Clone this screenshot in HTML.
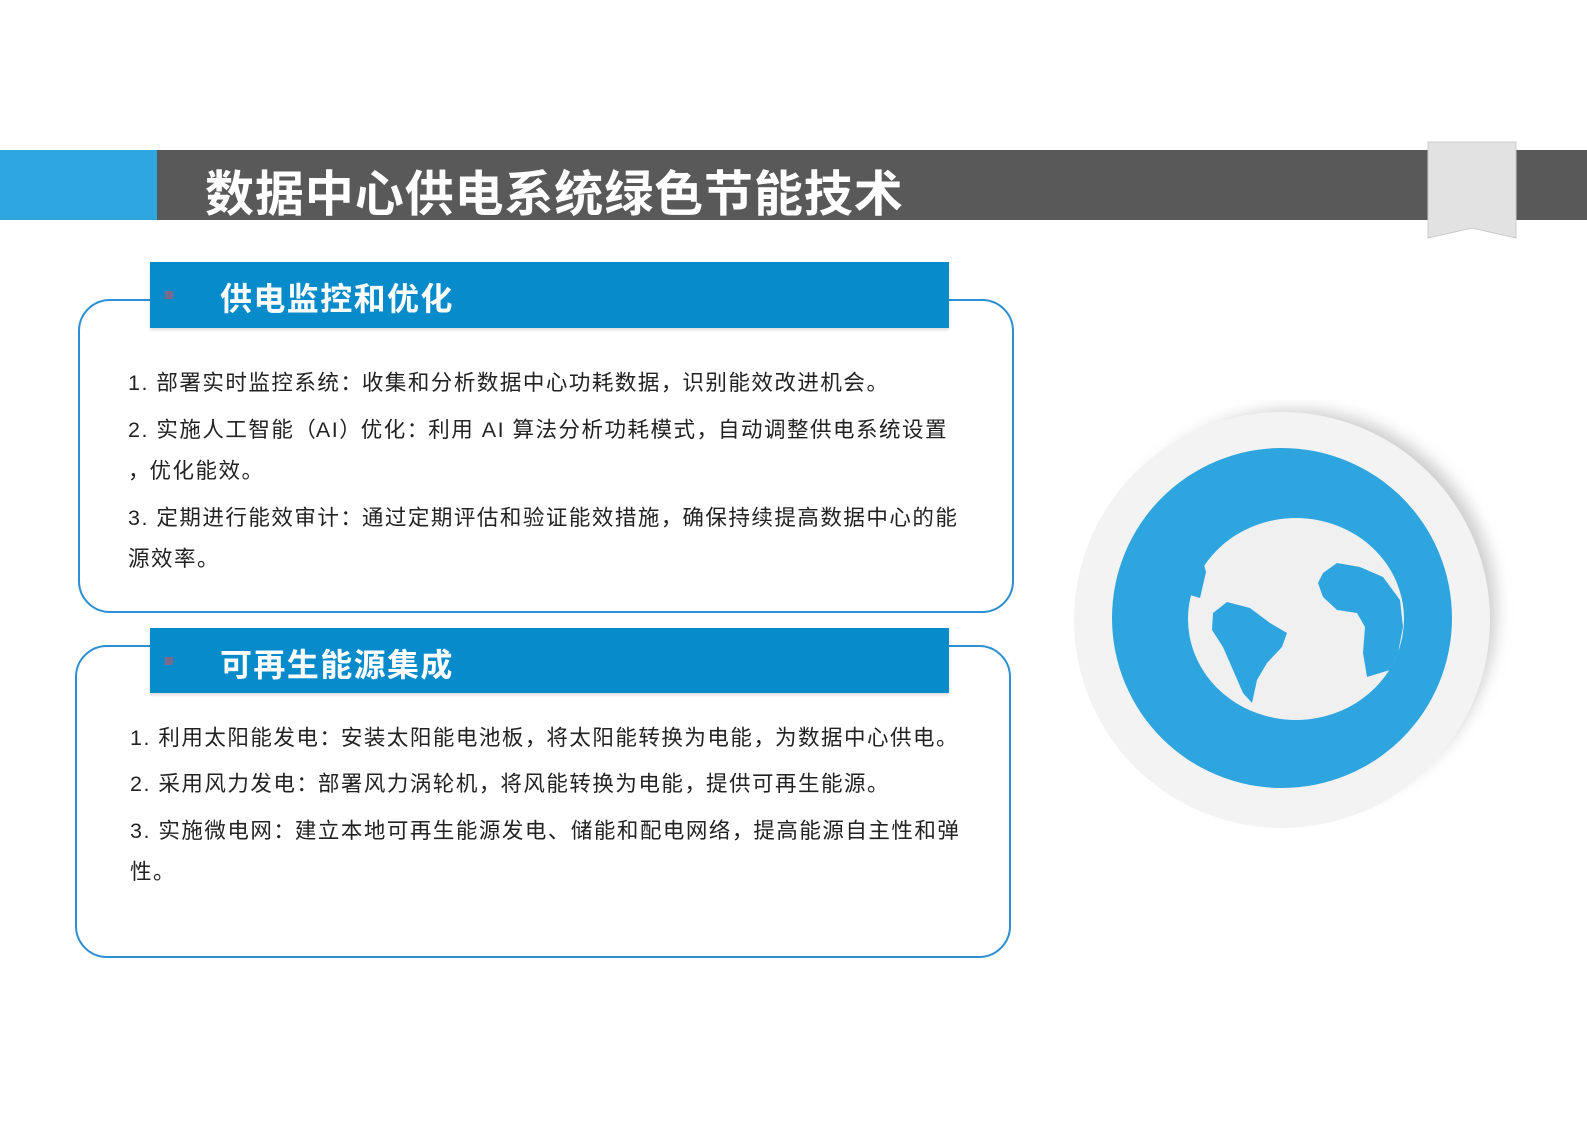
<!DOCTYPE html>
<html><head><meta charset="utf-8"><style>
body{margin:0;width:1587px;height:1122px;background:#fff;position:relative;overflow:hidden;font-family:"Liberation Sans","Noto Sans CJK SC",sans-serif}
.a{position:absolute}
.t{position:absolute;white-space:nowrap;font-size:21.5px;color:#222;letter-spacing:1.5px}
.t b{font-weight:normal;display:inline-block;width:1em;text-align:center}
.box{position:absolute;border:2px solid #2b8fd2;border-radius:32px}
.hd{position:absolute;background:#078bcb;color:#fff;font-weight:bold;font-size:32px;box-shadow:0 2px 3px rgba(0,0,0,.15)}
.hd span{position:absolute;left:70px;top:12px;letter-spacing:1.4px}
.hd i{position:absolute;left:15px;top:29px;width:8px;height:8px;background:#7a6a8a}
</style></head><body>
<div class="a" style="left:0;top:150px;width:157px;height:70px;background:#2ea6e0"></div>
<div class="a" style="left:157px;top:150px;width:1430px;height:70px;background:#595959"></div>
<div class="a" style="left:205px;top:155px;color:#fff;font-weight:bold;font-size:49px;letter-spacing:0.9px">数据中心供电系统绿色节能技术</div>
<svg class="a" style="left:1420px;top:138px" width="104" height="108"><path d="M8 4 H96 V100 L52 90 L8 100 Z" fill="#e2e2e2" stroke="#ccc" stroke-width="1"/></svg>

<div class="box" style="left:78px;top:299px;width:932px;height:310px"></div>
<div class="hd" style="left:150px;top:262px;width:799px;height:66px"><i></i><span>供电监控和优化</span></div>
<div class="t" style="left:128px;top:366px">1. 部署实时监控系统<b>：</b>收集和分析数据中心功耗数据<b>，</b>识别能效改进机会<b>。</b></div>
<div class="t" style="left:128px;top:413px">2. 实施人工智能<b>（</b>AI<b>）</b>优化<b>：</b>利用 AI 算法分析功耗模式<b>，</b>自动调整供电系统设置</div>
<div class="t" style="left:128px;top:454px"><b>，</b>优化能效<b>。</b></div>
<div class="t" style="left:128px;top:501px">3. 定期进行能效审计<b>：</b>通过定期评估和验证能效措施<b>，</b>确保持续提高数据中心的能</div>
<div class="t" style="left:128px;top:542px">源效率<b>。</b></div>

<div class="box" style="left:75px;top:645px;width:932px;height:309px"></div>
<div class="hd" style="left:150px;top:628px;width:799px;height:65px"><i></i><span>可再生能源集成</span></div>
<div class="t" style="left:130px;top:721px">1. 利用太阳能发电<b>：</b>安装太阳能电池板<b>，</b>将太阳能转换为电能<b>，</b>为数据中心供电<b>。</b></div>
<div class="t" style="left:130px;top:767px">2. 采用风力发电<b>：</b>部署风力涡轮机<b>，</b>将风能转换为电能<b>，</b>提供可再生能源<b>。</b></div>
<div class="t" style="left:130px;top:814px">3. 实施微电网<b>：</b>建立本地可再生能源发电、储能和配电网络<b>，</b>提高能源自主性和弹</div>
<div class="t" style="left:130px;top:855px">性<b>。</b></div>

<svg class="a" style="left:1060px;top:400px" width="460" height="440">
<defs><filter id="b"><feGaussianBlur stdDeviation="8"/></filter></defs>
<circle cx="236" cy="210" r="200" fill="#999" opacity=".5" filter="url(#b)"/>
<circle cx="222" cy="220" r="208" fill="#f3f3f3"/>
<circle cx="222" cy="218" r="170" fill="#2fa5e0"/>
<ellipse cx="236" cy="219" rx="108" ry="101" fill="#f0f0f0"/>
<path d="M153 213 L167 202 L190 208 L210 223 L227 233 L222 247 L207 263 L197 280 L192 303 L183 293 L173 270 L163 247 L152 230 Z" fill="#2fa5e0"/>
<path d="M263 173 L277 163 L300 167 L323 177 L340 200 L343 227 L338 253 L330 270 L307 277 L303 253 L305 227 L297 213 L277 210 L263 197 L258 183 Z" fill="#2fa5e0"/>
<path d="M128 160 L140 150 L146 172 L140 198 L130 195 Z" fill="#2fa5e0"/>
<path d="M140 140 L150 128 L178 120 L180 130 L160 140 Z" fill="#2fa5e0"/>
</svg>
</body></html>
